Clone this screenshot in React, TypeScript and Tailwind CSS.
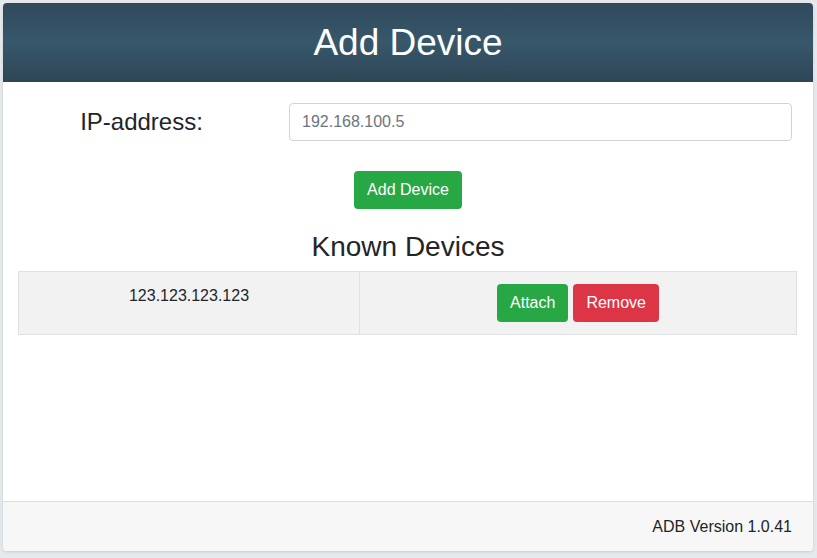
import { useState } from 'react';

function App() {
  const [ip, setIp] = useState('');
  const [devices] = useState(['123.123.123.123']);

  return (
    <div className="min-h-[558px] bg-[#e6e9ec] p-[3px] font-['Liberation_Sans',Arial,sans-serif] text-[#212529]">
      <div className="flex h-[548px] w-[810px] flex-col overflow-hidden rounded-[4px] bg-white shadow-sm">
        {/* Header */}
        <div className="flex h-[79px] items-center justify-center bg-gradient-to-b from-[#2f4a5b] via-[#37576b] to-[#2e4656]">
          <h1 className="text-[37px] leading-none text-white">Add Device</h1>
        </div>

        {/* Body */}
        <div className="flex-1 px-[15px] pt-[21px]">
          <div className="flex items-center">
            <label className="mr-[24px] w-[247px] text-center text-[24px] leading-[38px]">IP-address:</label>
            <input
              className="h-[38px] w-[503px] rounded-[4px] border border-[#ced4da] px-3 text-[16px] text-[#495057] placeholder:text-[#6c757d] focus:outline-none"
              placeholder="192.168.100.5"
              value={ip}
              onChange={(e) => setIp(e.target.value)}
            />
          </div>

          <div className="mt-[30px] flex justify-center">
            <button className="h-[38px] rounded-[4px] bg-[#28a745] px-[13px] text-[16px] text-white">Add Device</button>
          </div>

          <h2 className="mt-[21px] text-center text-[28px] leading-[34px]">Known Devices</h2>

          <table className="mt-[7px] w-[779px] border-collapse bg-[#f2f2f2]">
            <tbody>
              {devices.map((d) => (
                <tr key={d}>
                  <td className="w-[341px] border border-[#dee2e6] p-3 text-center align-top text-[16px] leading-6">{d}</td>
                  <td className="border border-[#dee2e6] p-3 text-center">
                    <div className="flex justify-center gap-[5px]">
                      <button className="h-[38px] rounded-[4px] bg-[#28a745] px-[13px] text-[16px] text-white">Attach</button>
                      <button className="h-[38px] rounded-[4px] bg-[#dc3545] px-[13px] text-[16px] text-white">Remove</button>
                    </div>
                  </td>
                </tr>
              ))}
            </tbody>
          </table>
        </div>

        {/* Footer */}
        <div className="flex h-[50px] items-center justify-end border-t border-[#dcdcdc] bg-[#f7f7f7] px-[21px] text-[16px]">
          ADB Version 1.0.41
        </div>
      </div>
    </div>
  );
}

export default App;
